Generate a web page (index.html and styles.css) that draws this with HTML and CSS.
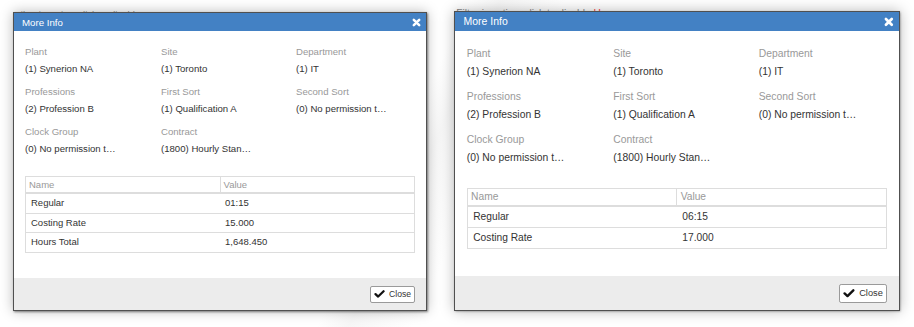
FILE: index.html
```html
<!DOCTYPE html>
<html lang="en">
<head>
    <meta charset="UTF-8">
    <meta name="viewport" content="width=device-width, initial-scale=1.0">
    <title>More Info</title>
    <link rel="stylesheet" href="styles.css">
</head>
<body>

    <div class="page">

        <div class="shot">
            <div class="peek">Filter is active, click to disable <span class="peek-link">Here</span></div>
            <div class="dialog">
                <div class="dialog-header">
                    <span class="dialog-title">More Info</span>
                    <svg class="icon-x" width="9" height="9" viewBox="0 0 10 10"><path d="M2 2L8 8M8 2L2 8"/></svg>
                </div>
                <div class="dialog-body">
                    <div class="fields">
                        <div class="field"><div class="field-label">Plant</div><div class="field-value">(1) Synerion NA</div></div>
                        <div class="field"><div class="field-label">Site</div><div class="field-value">(1) Toronto</div></div>
                        <div class="field"><div class="field-label">Department</div><div class="field-value">(1) IT</div></div>
                        <div class="field"><div class="field-label">Professions</div><div class="field-value">(2) Profession B</div></div>
                        <div class="field"><div class="field-label">First Sort</div><div class="field-value">(1) Qualification A</div></div>
                        <div class="field"><div class="field-label">Second Sort</div><div class="field-value">(0) No permission t…</div></div>
                        <div class="field"><div class="field-label">Clock Group</div><div class="field-value">(0) No permission t…</div></div>
                        <div class="field"><div class="field-label">Contract</div><div class="field-value">(1800) Hourly Stan…</div></div>
                    </div>
                    <table class="info-table">
                        <thead>
                            <tr><th>Name</th><th>Value</th></tr>
                        </thead>
                        <tbody>
                            <tr><td>Regular</td><td>01:15</td></tr>
                            <tr><td>Costing Rate</td><td>15.000</td></tr>
                            <tr><td>Hours Total</td><td>1,648.450</td></tr>
                        </tbody>
                    </table>
                </div>
                <div class="dialog-footer">
                    <button type="button" class="btn-close">
                        <svg class="icon-check" width="11" height="8" viewBox="0 0 12 9"><path d="M1.5 4.6L4.5 7.4L10.6 1.4"/></svg>
                        Close
                    </button>
                </div>
            </div>
        </div>

        <div class="shot shot-lg">
            <div class="peek">Filter is active, click to disable <span class="peek-link">Here</span></div>
            <div class="dialog">
                <div class="dialog-header">
                    <span class="dialog-title">More Info</span>
                    <svg class="icon-x" width="9" height="9" viewBox="0 0 10 10"><path d="M2 2L8 8M8 2L2 8"/></svg>
                </div>
                <div class="dialog-body">
                    <div class="fields">
                        <div class="field"><div class="field-label">Plant</div><div class="field-value">(1) Synerion NA</div></div>
                        <div class="field"><div class="field-label">Site</div><div class="field-value">(1) Toronto</div></div>
                        <div class="field"><div class="field-label">Department</div><div class="field-value">(1) IT</div></div>
                        <div class="field"><div class="field-label">Professions</div><div class="field-value">(2) Profession B</div></div>
                        <div class="field"><div class="field-label">First Sort</div><div class="field-value">(1) Qualification A</div></div>
                        <div class="field"><div class="field-label">Second Sort</div><div class="field-value">(0) No permission t…</div></div>
                        <div class="field"><div class="field-label">Clock Group</div><div class="field-value">(0) No permission t…</div></div>
                        <div class="field"><div class="field-label">Contract</div><div class="field-value">(1800) Hourly Stan…</div></div>
                    </div>
                    <table class="info-table">
                        <thead>
                            <tr><th>Name</th><th>Value</th></tr>
                        </thead>
                        <tbody>
                            <tr><td>Regular</td><td>06:15</td></tr>
                            <tr><td>Costing Rate</td><td>17.000</td></tr>
                        </tbody>
                    </table>
                </div>
                <div class="dialog-footer">
                    <button type="button" class="btn-close">
                        <svg class="icon-check" width="11" height="8" viewBox="0 0 12 9"><path d="M1.5 4.6L4.5 7.4L10.6 1.4"/></svg>
                        Close
                    </button>
                </div>
            </div>
        </div>

    </div>

</body>
</html>
```

FILE: styles.css
```css
html, body {
    height: 100%;
}
body {
    font-family: "Liberation Sans", Arial, sans-serif;
    margin: 0;
    background: linear-gradient(115deg, #fff 0, #fff 44%, #f6f6f6 47%, #fff 53%, #fff 100%);
    color: #333;
}
.page {
    display: flex;
    align-items: flex-start;
    gap: 27px;
    padding: 10px 0 0 13px;
}
.shot {
    width: 414px;
}
.shot-lg {
    zoom: 1.077;
    margin-top: -1px;
}
.peek {
    height: 2px;
    overflow: hidden;
    font-size: 9.5px;
    line-height: 9px;
    color: #777;
    padding-left: 2px;
    white-space: nowrap;
}
.peek-link {
    color: #d33;
}
.dialog {
    border: 1px solid #505050;
    background-color: #fff;
    box-shadow: 1px 1px 2px rgba(0, 0, 0, 0.45), 0 0 12px rgba(0, 0, 0, 0.28);
}
.dialog-header {
    display: flex;
    align-items: center;
    justify-content: space-between;
    height: 18px;
    padding: 0 5px 0 8px;
    background-color: #4381c4;
    color: white;
}
.dialog-title {
    font-size: 9.7px;
}
.icon-x path {
    fill: none;
    stroke: white;
    stroke-width: 2.8;
    stroke-linecap: round;
}
.dialog-body {
    padding: 15px 11px 25px 11px;
}
.fields {
    display: grid;
    grid-template-columns: 136px 135px 1fr;
    row-gap: 11px;
}
.field-label {
    font-size: 9.6px;
    line-height: 12px;
    color: #999;
    margin-bottom: 5px;
}
.field-value {
    font-size: 9.6px;
    line-height: 12px;
    color: #333;
    white-space: nowrap;
}
.info-table {
    width: 100%;
    margin-top: 21px;
    border-collapse: collapse;
    border: 1px solid #ddd;
    font-size: 9.5px;
}
.info-table th {
    width: 50%;
    text-align: left;
    font-weight: normal;
    color: #999;
    padding: 2px 3px 1px 3px;
    line-height: 12px;
    border-bottom: 2px solid #ddd;
}
.info-table th + th {
    border-left: 1px solid #ddd;
}
.info-table td {
    padding: 3px 5px;
    line-height: 12.6px;
    border-top: 1px solid #ddd;
    color: #333;
}
.dialog-footer {
    display: flex;
    justify-content: flex-end;
    padding: 8px 11px 7px 11px;
    background-color: #ececec;
}
.btn-close {
    display: flex;
    align-items: center;
    gap: 4px;
    height: 17px;
    padding: 0 3px;
    border: 1px solid #9a9a9a;
    border-radius: 2px;
    background-color: #fff;
    font-family: inherit;
    font-size: 8.6px;
    color: #333;
    cursor: pointer;
}
.icon-check path {
    fill: none;
    stroke: #111;
    stroke-width: 2.5;
    stroke-linecap: round;
    stroke-linejoin: round;
}
```
